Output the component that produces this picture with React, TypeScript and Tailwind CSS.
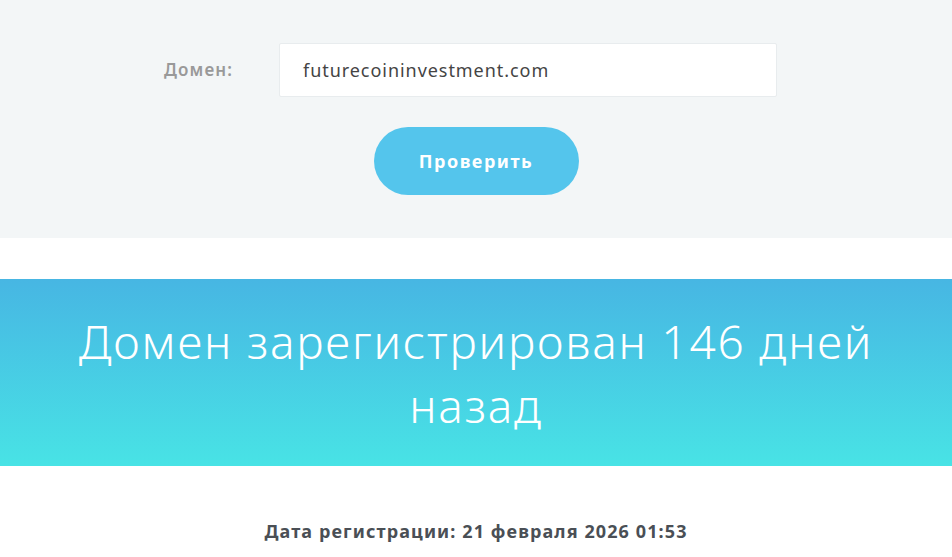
export default function App() {
  return (
    <div className="min-h-screen bg-white font-['Noto_Sans',sans-serif]">
      {/* Form */}
      <div className="bg-[#f3f6f7] pt-[43px] pb-[43px]">
        <div className="flex items-center">
          <label className="w-[279px] pr-[46px] text-right text-[17px] tracking-[1.1px] font-semibold text-[#999]">Домен:</label>
          <div className="w-[498px] h-[54px] bg-white border border-[#e8ecee] rounded-[2px] flex items-center px-[23px] text-[18px] tracking-[0.95px] text-[#444]">
            futurecoininvestment.com
          </div>
        </div>
        <div className="flex justify-center mt-[30px]">
          <button className="w-[205px] h-[68px] rounded-full bg-[#54c5ec] text-white font-bold text-[18px] tracking-[1.5px]">
            Проверить
          </button>
        </div>
      </div>

      {/* Result */}
      <div className="mt-[41px] h-[187px] bg-gradient-to-b from-[#47b6e3] to-[#48e3e5] flex items-center justify-center">
        <h1 className="max-w-[820px] text-center text-white text-[46px] leading-[64px] tracking-[1.8px] font-light">
          Домен зарегистрирован 146 дней назад
        </h1>
      </div>

      <p className="mt-[52px] text-center text-[18px] tracking-[1.1px] font-bold text-[#4a4f55]">
        Дата регистрации: 21 февраля 2026 01:53
      </p>
    </div>
  );
}
